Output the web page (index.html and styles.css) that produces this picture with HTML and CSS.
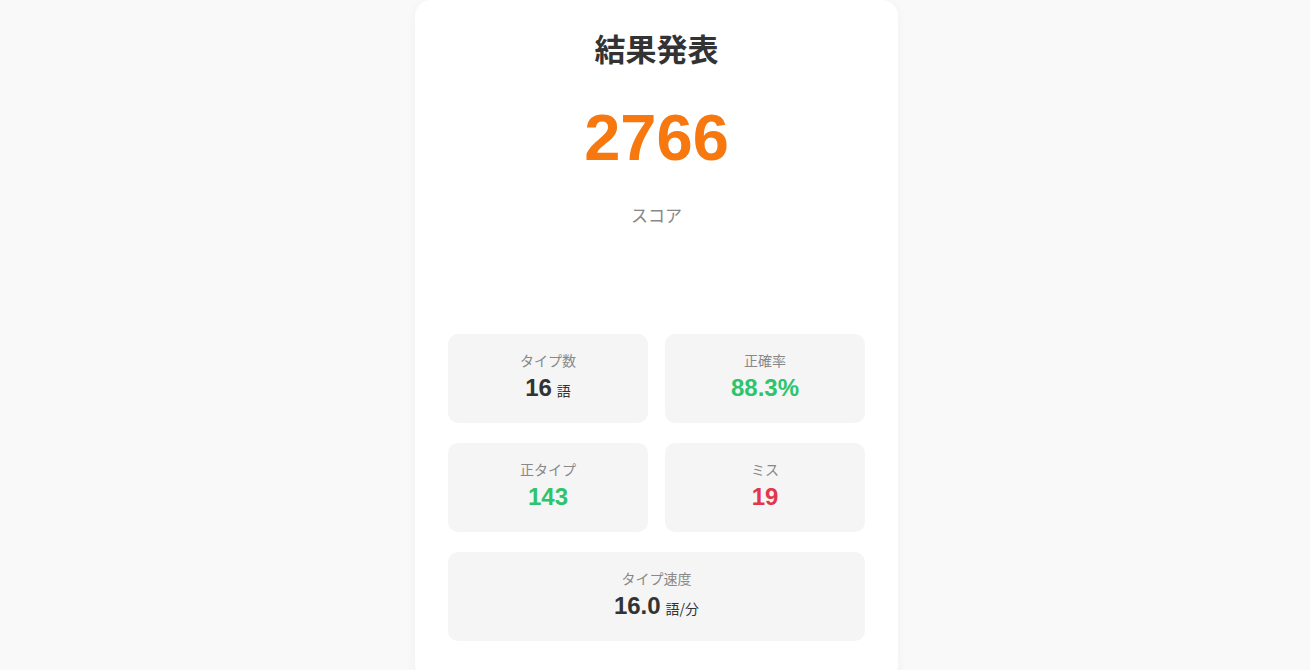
FILE: index.html
```html
<!DOCTYPE html>
<html lang="ja">
<head>
    <meta charset="UTF-8">
    <meta name="viewport" content="width=device-width, initial-scale=1.0">
    <title>結果発表</title>
    <link rel="stylesheet" href="styles.css">
</head>
<body>
    <div class="container">
        <h1>結果発表</h1>
        <div class="score">2766</div>
        <p class="score-label">スコア</p>

        <div class="stats">
            <div class="stat-item">
                <div class="stat-label">タイプ数</div>
                <div class="stat-value">16<span class="unit">語</span></div>
            </div>
            <div class="stat-item">
                <div class="stat-label">正確率</div>
                <div class="stat-value good">88.3%</div>
            </div>
            <div class="stat-item">
                <div class="stat-label">正タイプ</div>
                <div class="stat-value good">143</div>
            </div>
            <div class="stat-item">
                <div class="stat-label">ミス</div>
                <div class="stat-value bad">19</div>
            </div>
            <div class="stat-item wide">
                <div class="stat-label">タイプ速度</div>
                <div class="stat-value">16.0<span class="unit">語/分</span></div>
            </div>
        </div>
    </div>
</body>
</html>
```

FILE: styles.css
```css
* {
    margin: 0;
    padding: 0;
    box-sizing: border-box;
}

body {
    font-family: "Liberation Sans", "Noto Sans CJK JP", sans-serif;
    background: #f9f9f9;
    height: 670px;
    overflow: hidden;
    padding-left: 3px;
}

.container {
    width: 483px;
    margin: 0 auto;
    background: white;
    border-radius: 16px;
    padding: 28px 33px 40px;
    box-shadow: 0 2px 12px rgba(0,0,0,0.04);
    text-align: center;
}

h1 {
    color: #333;
    font-size: 31px;
    font-weight: bold;
    line-height: 40px;
    font-family: "Noto Sans CJK JP", sans-serif;
}

.score {
    margin-top: 31px;
    font-size: 65px;
    font-weight: bold;
    line-height: 78px;
    color: #f7780f;
}

.score-label {
    margin-top: 26px;
    font-size: 17px;
    line-height: 24px;
    color: #888;
    font-family: "Noto Sans CJK JP", sans-serif;
}

.stats {
    display: grid;
    grid-template-columns: 1fr 1fr;
    column-gap: 17px;
    row-gap: 20px;
    margin-top: 107px;
}

.stat-item {
    background: #f5f5f5;
    border-radius: 10px;
    height: 89px;
    padding-top: 16px;
}

.stat-item.wide {
    grid-column: span 2;
}

.stat-label {
    font-size: 14px;
    line-height: 20px;
    color: #888;
    font-family: "Noto Sans CJK JP", sans-serif;
}

.stat-value {
    margin-top: 3px;
    font-size: 24px;
    font-weight: bold;
    line-height: 30px;
    color: #333;
}

.stat-value .unit {
    margin-left: 5px;
    font-size: 14px;
    font-weight: normal;
    font-family: "Noto Sans CJK JP", sans-serif;
}

.stat-value.good {
    color: #2ec46c;
}

.stat-value.bad {
    color: #e2364c;
}
```
